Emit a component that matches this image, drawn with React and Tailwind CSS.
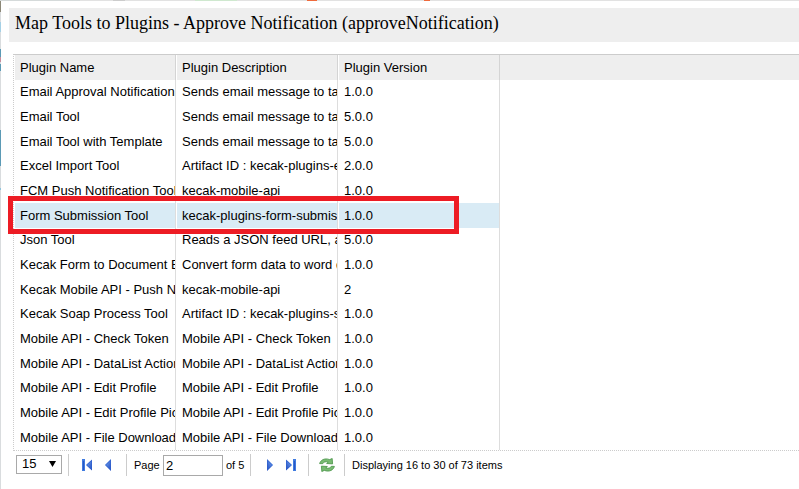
import { useState } from "react";

const rows = [
  ["Email Approval Notification", "Sends email message to ta", "1.0.0"],
  ["Email Tool", "Sends email message to ta", "5.0.0"],
  ["Email Tool with Template", "Sends email message to ta", "5.0.0"],
  ["Excel Import Tool", "Artifact ID : kecak-plugins-e", "2.0.0"],
  ["FCM Push Notification Tool", "kecak-mobile-api", "1.0.0"],
  ["Form Submission Tool", "kecak-plugins-form-submis", "1.0.0"],
  ["Json Tool", "Reads a JSON feed URL, a", "5.0.0"],
  ["Kecak Form to Document E", "Convert form data to word d", "1.0.0"],
  ["Kecak Mobile API - Push N", "kecak-mobile-api", "2"],
  ["Kecak Soap Process Tool", "Artifact ID : kecak-plugins-s", "1.0.0"],
  ["Mobile API - Check Token", "Mobile API - Check Token", "1.0.0"],
  ["Mobile API - DataList Action", "Mobile API - DataList Action", "1.0.0"],
  ["Mobile API - Edit Profile", "Mobile API - Edit Profile", "1.0.0"],
  ["Mobile API - Edit Profile Pic", "Mobile API - Edit Profile Pic", "1.0.0"],
  ["Mobile API - File Download", "Mobile API - File Download", "1.0.0"],
];
const heads = ["Plugin Name", "Plugin Description", "Plugin Version"];

function Separator() {
  return <span className="h-[22px] w-px shrink-0 bg-[#cccccc]" />;
}

function Gradient({ id }) {
  return (
    <defs>
      <linearGradient id={id} x1="0" x2="1" y1="0" y2="1">
        <stop offset="0" stopColor="#7fb0f5" />
        <stop offset="1" stopColor="#1b46bd" />
      </linearGradient>
    </defs>
  );
}

function EdgeIcon({ id, flip }) {
  return (
    <svg width="10" height="12" viewBox="0 0 10 12" className={flip ? "-scale-x-100" : ""} aria-hidden="true">
      <Gradient id={id} />
      <rect x="0" y="0" width="3" height="12" fill="#3f7be0" />
      <rect x="1" y="2" width="1" height="9" fill="#2a57c4" />
      <path d="M10 0.5V11.5L4 6Z" fill={`url(#${id})`} />
      <path d="M9.5 1.5V10.5L4.7 6Z" fill="none" stroke="#2f60cf" strokeWidth="0.7" />
    </svg>
  );
}

function StepIcon({ id, flip }) {
  return (
    <svg width="6" height="12" viewBox="0 0 6 12" className={flip ? "-scale-x-100" : ""} aria-hidden="true">
      <Gradient id={id} />
      <path d="M6 0V12L0 6Z" fill={`url(#${id})`} />
      <path d="M5.6 1.2V10.8L0.6 6Z" fill="none" stroke="#2f60cf" strokeWidth="0.7" />
    </svg>
  );
}

function RefreshIcon() {
  return (
    <svg width="16" height="14" viewBox="0 0 16 14" aria-hidden="true">
      <g fill="#79bb72" stroke="#479347" strokeWidth="0.8" strokeLinejoin="round">
        <path d="M0.6 5.6C1.4 2.2 5.6-0.4 10.6 1.6L13.2 0.5 13.6 5.9 7.6 5.5 9.2 4.2C6.4 3.1 4.6 4.1 3.7 5.7Z" />
        <path d="M15.4 8.4C14.6 11.8 10.4 14.4 5.4 12.4L2.8 13.5 2.4 8.1 8.4 8.5 6.8 9.8C9.6 10.9 11.4 9.9 12.3 8.3Z" />
      </g>
    </svg>
  );
}

function IconButton({ label, onClick, children }) {
  return (
    <button type="button" aria-label={label} title={label} onClick={onClick} className="flex h-5 items-center">
      {children}
    </button>
  );
}

export default function App() {
  const [page, setPage] = useState("2");
  const [selected, setSelected] = useState(5);
  const go = (n) => setPage(String(Math.min(5, Math.max(1, n))));
  return (
    <div className="min-h-screen overflow-hidden bg-white font-['Liberation_Sans',Arial,sans-serif] text-black">
      <div className="h-px bg-[linear-gradient(to_right,#d5dada_80px,#e2e2e2_80px_113px,#cccccc_113px_125px,#e2e2e2_125px_195px,#cfe8cf_195px_237px,#e2e2e2_237px_307px,#ee6a3c_307px_317px,#e2e2e2_317px_424px,#ee6a3c_424px_430px,#e2e2e2_430px)]" />
      <div className="flex min-h-[488px]">
        <div className="w-px shrink-0 bg-[linear-gradient(#8c8878_11px,#d9dcde_11px_21px,#a5d0e5_21px_31px,#d9dcde_31px_48px,#5b9ab5_48px_56px,#c78d9c_56px_61px,#d9dcde_61px_63px,#5b9ab5_63px_70px,#d9dcde_70px_129px,#5b9ab5_129px_165px,#d9dcde_165px_187px,#8fc3dc_187px_189px,#d9dcde_189px)]" />
        <main className="min-w-0 flex-1 pt-[7px] pl-2">
          <h1 className="h-[34px] bg-[#eeeeee] pl-[6px] font-['Liberation_Serif',serif] text-[18px] leading-[30px]">
            Map Tools to Plugins - Approve Notification (approveNotification)
          </h1>
          <section className="mt-3 ml-1">
            <div className="relative border-t border-b border-l border-[#cccccc] bg-[linear-gradient(#eeeeee,#eeeeee)] bg-[length:100%_25px] bg-no-repeat [border-bottom-style:dotted] [border-left-style:dotted]">
              <table className="h-[395px] w-[486px] table-fixed border-separate border-spacing-0 text-[13px] leading-5">
                <thead>
                  <tr className="h-[25px]">
                    {heads.map((h) => (
                      <th key={h} className="w-[162px] border-r border-l border-r-[#d4d4d4] border-l-white p-0 pl-[5px] text-left font-normal">
                        {h}
                      </th>
                    ))}
                  </tr>
                </thead>
                <tbody>
                  {rows.map((r, i) => (
                    <tr key={r[0]} onClick={() => setSelected(i)}>
                      {r.map((c, j) => (
                        <td
                          key={j}
                          className={
                            "overflow-hidden border-r border-l border-r-[#dddddd] border-l-white bg-clip-padding p-0 pl-[5px] whitespace-nowrap " +
                            (i === selected ? "bg-[#d9ebf5]" : "")
                          }
                        >
                          {c}
                        </td>
                      ))}
                    </tr>
                  ))}
                </tbody>
              </table>
              <div className="pointer-events-none absolute top-[141px] -left-[6px] h-[38px] w-[451px] border-5 border-[#ed1c24]" />
            </div>
            <div className="flex items-center pt-[3px] pl-[3px] text-[11px] leading-5 whitespace-nowrap">
              <div className="relative mr-[6px] h-[21px]">
                <select
                  aria-label="Rows per page"
                  defaultValue="15"
                  className="block h-[19px] w-[46px] appearance-none border border-[#a9a9a9] bg-white pl-[5px] text-[13px] leading-4"
                >
                  <option>15</option>
                  <option>30</option>
                </select>
                <svg width="7" height="6" viewBox="0 0 7 6" className="pointer-events-none absolute top-[6px] right-[6px]" aria-hidden="true">
                  <path d="M0 0H7L3.5 6Z" fill="black" />
                </svg>
              </div>
              <Separator />
              <div className="flex w-[57px] gap-[13px] pl-[13px]">
                <IconButton label="First page" onClick={() => go(1)}><EdgeIcon id="first" /></IconButton>
                <IconButton label="Previous page" onClick={() => go(Number(page) - 1)}><StepIcon id="prev" /></IconButton>
              </div>
              <Separator />
              <label htmlFor="page" className="w-9 pl-[7px]">Page</label>
              <input
                id="page"
                value={page}
                onChange={(e) => setPage(e.target.value)}
                className="h-[21px] w-[60px] border border-[#a9a9a9] bg-white pl-[2px] text-[13px]"
              />
              <span className="w-[27px] pl-[3px]">of 5</span>
              <Separator />
              <div className="flex w-[57px] gap-[13px] pl-4">
                <IconButton label="Next page" onClick={() => go(Number(page) + 1)}><StepIcon id="next" flip /></IconButton>
                <IconButton label="Last page" onClick={() => go(5)}><EdgeIcon id="last" flip /></IconButton>
              </div>
              <Separator />
              <div className="w-[35px] pl-[10px]">
                <IconButton label="Reload" onClick={() => go(2)}><RefreshIcon /></IconButton>
              </div>
              <Separator />
              <span className="pl-[7px]">Displaying 16 to 30 of 73 items</span>
            </div>
          </section>
        </main>
      </div>
    </div>
  );
}
